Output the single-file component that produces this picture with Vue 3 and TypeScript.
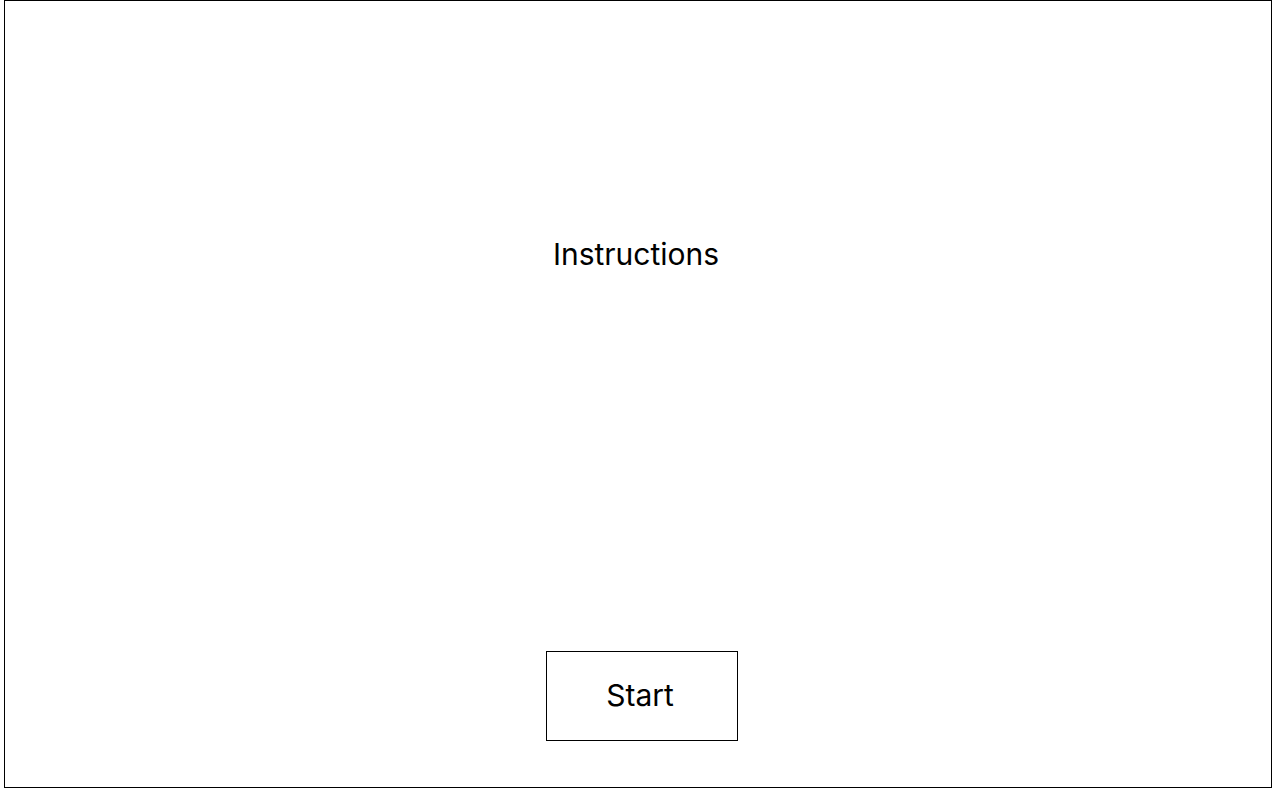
<script setup lang="ts">
import { ref } from 'vue'

const started = ref<boolean>(false)

function start(): void {
  started.value = true
}
</script>

<template>
  <main class="screen">
    <section class="panel" :data-started="started">
      <h1 class="title">Instructions</h1>
      <div class="actions">
        <button class="start" type="button" @click="start">Start</button>
      </div>
    </section>
  </main>
</template>

<style>
body {
  margin: 0;
  background: #fff;
}
</style>

<style scoped>
.screen {
  box-sizing: border-box;
  display: flex;
  min-height: 100vh;
  padding: 0 8px 12px 4px;
  background: #fff;
  color: #000;
  font-family: Inter, "Liberation Sans", sans-serif;
}

.panel {
  box-sizing: border-box;
  display: flex;
  flex: 1;
  flex-direction: column;
  align-items: center;
  justify-content: space-between;
  padding: 233px 0 46px;
  border: 1px solid #000;
}

.title {
  margin: 0;
  padding-right: 4px;
  font-size: 30px;
  font-weight: 400;
  line-height: 40px;
}

.actions {
  display: flex;
  padding-left: 8px;
}

.start {
  box-sizing: border-box;
  min-width: 192px;
  margin: 0;
  padding: 23px 60px 25px 56px;
  border: 1px solid #000;
  border-radius: 0;
  background: #fff;
  color: #000;
  font-family: inherit;
  font-size: 30px;
  font-weight: 400;
  line-height: 40px;
  cursor: pointer;
}
</style>
